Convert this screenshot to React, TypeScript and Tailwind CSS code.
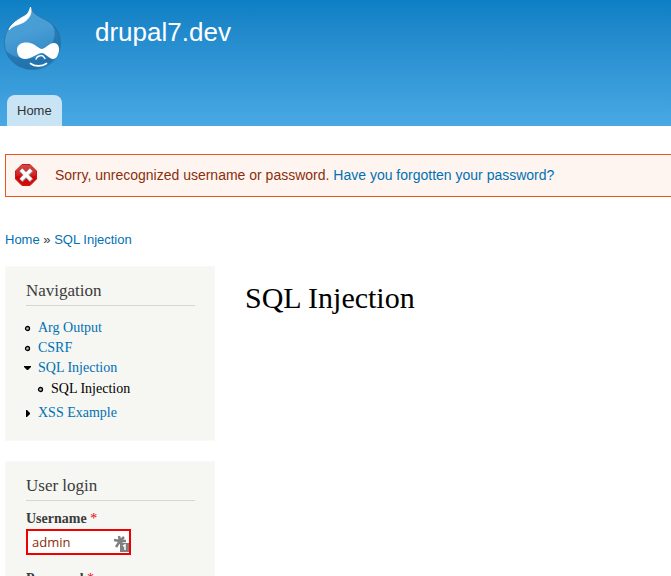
import React from "react";

const serif = "font-[Georgia,'Liberation_Serif',serif]";

function DrupalLogo() {
  return (
    <svg viewBox="0 0 60 66" className="h-[66px] w-[60px]" role="img" aria-hidden="true">
      <defs>
        <linearGradient id="drop" x1="0" y1="0" x2="0.3" y2="1">
          <stop offset="0" stopColor="#4a9fd6" />
          <stop offset="0.5" stopColor="#489dd5" />
          <stop offset="1" stopColor="#2f86c2" />
        </linearGradient>
      </defs>
      <path
        d="M26.5 1C27.5 7 32 10 38 13C49 18 56.5 26 56.5 38C56.5 54 44 64.5 28.5 64.5C13 64.5 0.5 53 0.5 37.5C0.5 27 6 19 13 15C20 11 25 8 26.5 1Z"
        fill="url(#drop)"
        stroke="#2a72a5"
        strokeWidth="0.8"
      />
      <path d="M48 19C55 25 57 32 56 41C53 57 40 64 28 64C15 64 5 56 2 46C16 58 40 56 48 39C52 31 51 24 48 19Z" fill="#125f98" opacity="0.5" />
      <path d="M26.5 2C28 8 26 12 22 15.5C17 20 10 19 5 25C7 19 13 15.5 18 12.5C23 10 25 8 26.5 2Z" fill="#fff" stroke="#fff" strokeWidth="0.9" strokeLinejoin="round" />
      <path d="M13 45C13 39 19 36.5 26 38C31 39 35 44 38 44C42 43 45 38 50 38C54 38 55.5 42 55 46C54 51 52 54 49 54C45 54 41 48 38 48C33 48 28 54 21 54C16 54 13 50 13 45Z" fill="#fff" />
      <path d="M32 54C33 51 37 50 39 51L41 53.5" fill="none" stroke="#fff" strokeWidth="1.4" strokeLinecap="round" />
      <path d="M26.5 58.5C31 62 38 61.5 42.5 58.5" fill="none" stroke="#fff" strokeWidth="1.7" strokeLinecap="round" />
    </svg>
  );
}

function ErrorIcon() {
  return (
    <svg viewBox="0 0 22 22" className="size-[22px] shrink-0" aria-hidden="true">
      <defs>
        <linearGradient id="stop" x1="0" y1="0" x2="0" y2="1">
          <stop offset="0" stopColor="#cf4d4d" />
          <stop offset="0.5" stopColor="#d62020" />
          <stop offset="0.6" stopColor="#d40000" />
          <stop offset="1" stopColor="#df0707" />
        </linearGradient>
      </defs>
      <path d="M7 0.5H15L21.5 7V15L15 21.5H7L0.5 15V7Z" fill="url(#stop)" stroke="#c51a1a" strokeLinejoin="round" />
      <path d="M7.5 7.5L15 15M15 7.5L7.5 15" stroke="#8f8f8f" strokeWidth="4.6" strokeLinecap="square" />
      <path d="M7.2 7L14.8 14.6M14.8 7L7.2 14.6" stroke="#fff" strokeWidth="3.4" strokeLinecap="square" />
    </svg>
  );
}

function Marker({ kind }: { kind: "leaf" | "open" | "closed" }) {
  return (
    <svg viewBox="0 0 7 7" className="size-[7px] shrink-0" aria-hidden="true">
      {kind === "leaf" && <circle cx="3.5" cy="3.5" r="2" fill="#bbb" stroke="#000" strokeWidth="1.3" />}
      {kind === "open" && <path d="M0 1H7V2L4 5H3L0 2Z" />}
      {kind === "closed" && <path d="M2 0H3L6 3V4L3 7H2Z" />}
    </svg>
  );
}

function MenuItem({ kind, label, active }: { kind: "leaf" | "open" | "closed"; label: string; active?: boolean }) {
  return (
    <div className="flex h-5 items-center gap-[7px]">
      <Marker kind={kind} />
      <a href="#" className={active ? "text-black" : "text-[#0071b3]"}>{label}</a>
    </div>
  );
}

function Block({ title, children }: { title: string; children: React.ReactNode }) {
  return (
    <section className="bg-[#f6f6f2] pt-[15px] pr-5 pb-[18px] pl-[21px] outline-1 -outline-offset-1 outline-[#f9f9f9]">
      <h2 className="border-b border-[#d6d6d6] pb-1 text-[17px] leading-5">{title}</h2>
      {children}
    </section>
  );
}

function Field({ id, label, type, value }: { id: string; label: string; type: string; value: string }) {
  return (
    <div className="mb-[14px]">
      <label htmlFor={id} className="block text-sm leading-5 font-bold">
        {label} <span className="font-normal text-red-600">*</span>
      </label>
      <div className="relative w-[105px]">
        <input
          id={id}
          type={type}
          defaultValue={value}
          className="block h-[26px] w-full border-2 border-[#f00000] bg-white px-1 font-['Open_Sans',sans-serif] text-[13px] text-[#8c2e0b] outline-none"
        />
        <svg viewBox="0 0 16 17" className="absolute right-0.5 bottom-[3px] h-[17px] w-4" aria-hidden="true">
          <path d="M6 1L7 6M11 2L7 6M13 6H7M1 5L7 6M3 12L7 6M10 11L7 6" stroke="#808080" strokeWidth="2.5" />
          <path d="M7 8H16V17H7Z" fill="#808080" />
          <path d="M10 11L12 10V15" fill="none" stroke="#fff" strokeWidth="1.5" />
        </svg>
      </div>
    </div>
  );
}

export default function App() {
  return (
    <div className="h-screen overflow-hidden bg-white font-['Liberation_Sans',Arial,sans-serif] text-[#3b3b3b]">
      <header className="bg-linear-to-b from-[#0d7fc4] to-[#48a9e4]">
        <div className="flex h-[95px] gap-[31px] pt-[5px] pl-1">
          <a href="#" aria-label="Drupal home"><DrupalLogo /></a>
          <a href="#" className="pt-3 text-[26px] leading-[30px] text-white">drupal7.dev</a>
        </div>
        <nav className="flex pl-[7px]">
          <a href="#" className="rounded-t-lg bg-[#c8e4f5] px-[10px] text-[13px] leading-[31px] text-[#333]">Home</a>
        </nav>
      </header>

      <div className="mt-7 ml-[5px]">
        <div role="alert" className="flex h-[43px] items-center gap-[18px] border border-r-0 border-[#ed541d] bg-[#fef5f1] pb-px pl-[9px] text-sm text-[#8c2e0b]">
          <ErrorIcon />
          <p>
            Sorry, unrecognized username or password.{" "}
            <a href="#" className="text-[#0071b3]">Have you forgotten your password?</a>
          </p>
        </div>

        <nav aria-label="Breadcrumb" className="mt-[33px] text-[13px] leading-5">
          <a href="#" className="text-[#0071b3]">Home</a> » <a href="#" className="text-[#0071b3]">SQL Injection</a>
        </nav>

        <div className={`mt-4 flex gap-[30px] ${serif}`}>
          <aside className="flex w-[210px] shrink-0 flex-col gap-5">
            <Block title="Navigation">
              <ul className="mt-3 -ml-0.5 text-sm">
                <li><MenuItem kind="leaf" label="Arg Output" /></li>
                <li><MenuItem kind="leaf" label="CSRF" /></li>
                <li>
                  <MenuItem kind="open" label="SQL Injection" />
                  <ul className="mb-1 pt-px pl-[13px]">
                    <li><MenuItem kind="leaf" label="SQL Injection" active /></li>
                  </ul>
                </li>
                <li><MenuItem kind="closed" label="XSS Example" /></li>
              </ul>
            </Block>
            <Block title="User login">
              <form className="mt-2">
                <Field id="username" label="Username" type="text" value="admin" />
                <Field id="password" label="Password" type="password" value="" />
              </form>
            </Block>
          </aside>
          <main className="min-w-0 flex-1 pt-4">
            <h1 className="text-[30px] leading-8 text-black">SQL Injection</h1>
          </main>
        </div>
      </div>
    </div>
  );
}
